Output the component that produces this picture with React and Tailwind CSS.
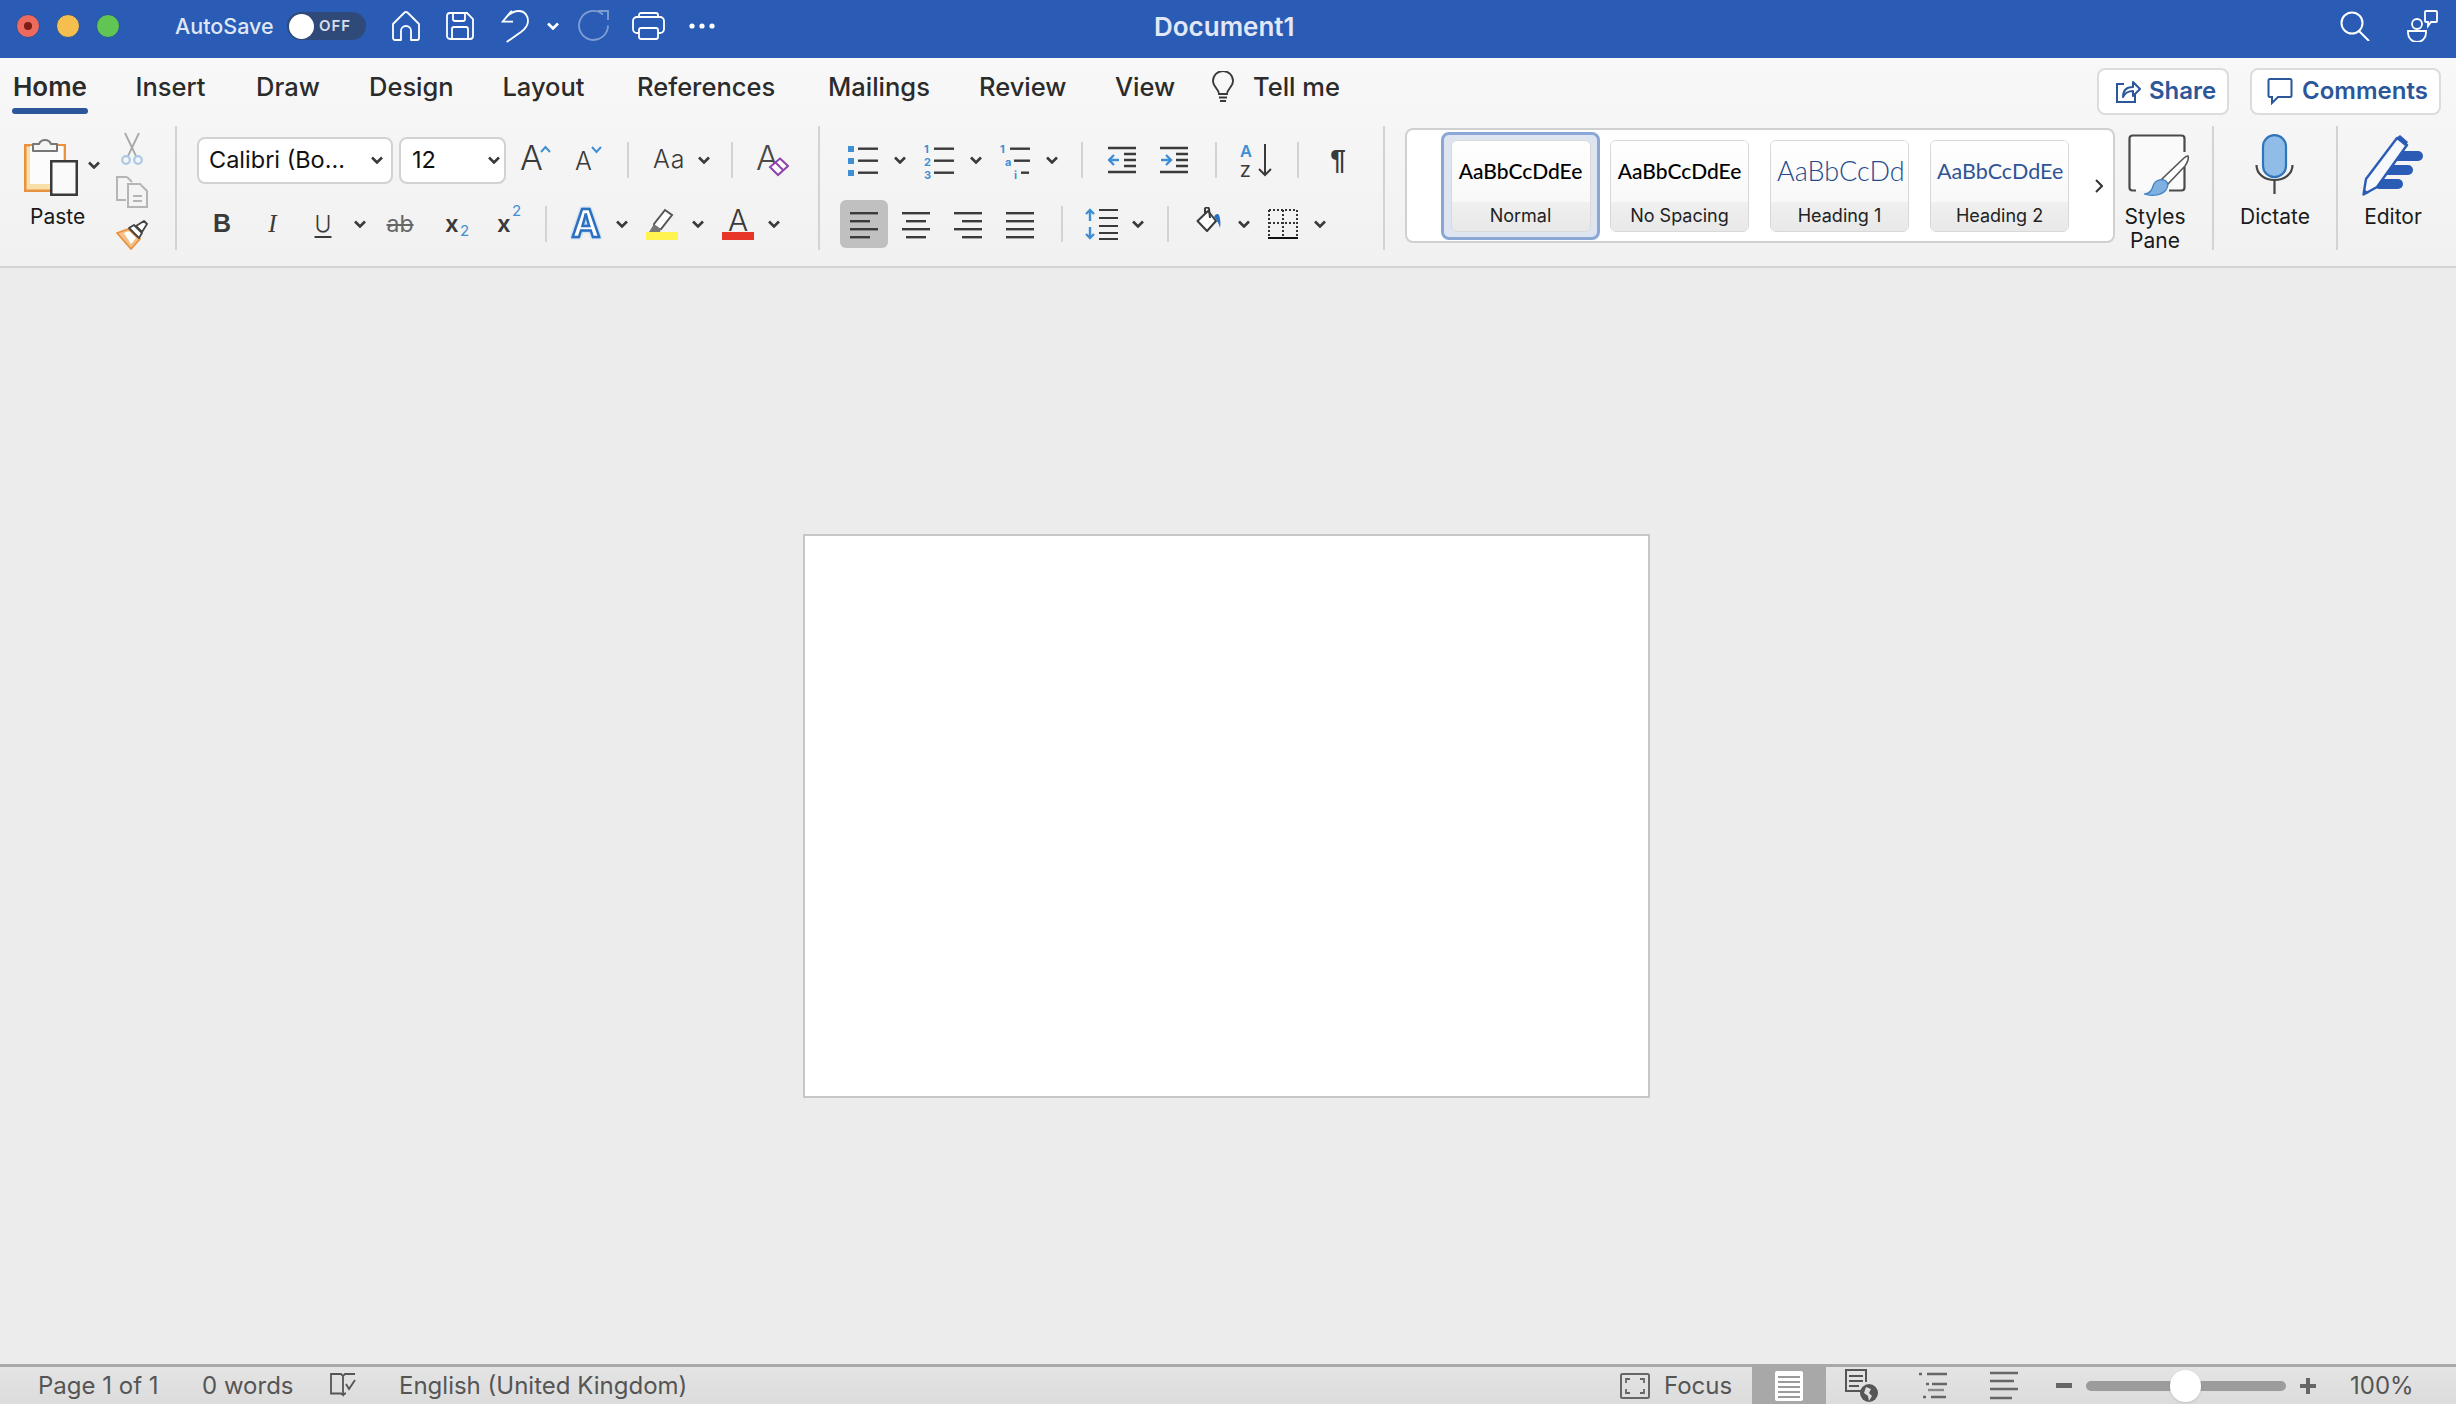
const UI = "font-['Inter','Noto_Sans',sans-serif]";

const Chev = ({ className = '', color = '#3a3a3a' }) => (
  <svg width="12" height="8" viewBox="0 0 12 8" className={'shrink-0 ' + className}>
    <path d="M1 1.5l5 5 5-5" fill="none" stroke={color} strokeWidth="2.6" />
  </svg>
);

const Sep = ({ className = '' }) => <div className={'w-[2px] h-[36px] shrink-0 bg-[#d3d3d3] ' + className} />;
const GroupSep = () => <div className="w-[2px] h-[124px] mt-[6px] shrink-0 bg-[#d3d3d3]" />;

function Lines({ rows, className = '' }) {
  // rows: [x1, x2] for horizontal bars, used by alignment icons
  return (
    <svg width="28" height="30" viewBox="0 0 28 30" className={'shrink-0 ' + className}>
      {rows.map((r, i) => (
        <rect key={i} x={r[0]} y={3 + i * 8} width={r[1] - r[0]} height="2.4" fill="#3a3a3a" />
      ))}
    </svg>
  );
}

function TitleBar() {
  return (
    <div className="h-[58px] shrink-0 bg-[#2a5cb5] flex items-center relative text-white pb-[6px]">
      <div className="w-[24px] h-[24px] rounded-full bg-[#ed6a5e] border border-[#24509c] ml-[16px] flex items-center justify-center">
        <div className="w-[8px] h-[8px] rounded-full bg-[#7c1d16]" />
      </div>
      <div className="w-[24px] h-[24px] rounded-full bg-[#f5bf4f] border border-[#24509c] ml-[16px]" />
      <div className="w-[24px] h-[24px] rounded-full bg-[#61c554] border border-[#24509c] ml-[16px]" />
      <span className="ml-[55px] w-[100px] text-[21.5px] font-medium text-[#dfe7f5] whitespace-nowrap">AutoSave</span>
      <div className="ml-[12px] w-[79px] h-[28px] rounded-full bg-[#2f4a78] flex items-center pl-[2px]">
        <div className="w-[25px] h-[25px] rounded-full bg-white" />
        <span className="ml-[5px] text-[15px] font-semibold tracking-[1px] text-[#d7deeb]">OFF</span>
      </div>
      <svg width="28" height="30" viewBox="0 0 28 30" className="ml-[26px]">
        <path d="M1 13L12 2q2-2 4 0l11 11v14a2 2 0 0 1-2 2h-6v-9a5 5 0 0 0-10 0v9H3a2 2 0 0 1-2-2z" fill="none" stroke="#fff" strokeWidth="1.800" strokeLinejoin="round" />
      </svg>
      <svg width="28" height="28" viewBox="0 0 28 28" className="ml-[26px]">
        <path d="M4 1h17l6 6v17a3 3 0 0 1-3 3H4a3 3 0 0 1-3-3V4a3 3 0 0 1 3-3z" fill="none" stroke="#fff" strokeWidth="1.800" />
        <path d="M7 1v6a2 2 0 0 0 2 2h8a2 2 0 0 0 2-2V1M6 27V17a2 2 0 0 1 2-2h12a2 2 0 0 1 2 2v10" fill="none" stroke="#fff" strokeWidth="1.800" />
      </svg>
      <svg width="28" height="34" viewBox="0 0 28 34" className="ml-[27px]">
        <path d="M10.700 1.700l-9 11H12M1.700 12.700C6 6 12 2 18 2c6 0 9 5 9 10 0 5-3 8-7 11L5.700 33" fill="none" stroke="#fff" strokeWidth="1.800" />
      </svg>
      <Chev className="ml-[18px]" color="#fff" />
      <svg width="32" height="32" viewBox="0 0 32 32" className="ml-[19px] opacity-40">
        <path d="M25 4.500A14.500 14.500 0 1 0 30 15.500M20 1h10v9" fill="none" stroke="#fff" strokeWidth="1.800" />
      </svg>
      <svg width="33" height="28" viewBox="0 0 33 28" className="ml-[22px]">
        <path d="M7 5V3a2 2 0 0 1 2-2h15a2 2 0 0 1 2 2v2M7 21H5a4 4 0 0 1-4-4V9a4 4 0 0 1 4-4h23a4 4 0 0 1 4 4v8a4 4 0 0 1-4 4h-2" fill="none" stroke="#fff" strokeWidth="1.800" />
        <rect x="7" y="16" width="19" height="11" rx="2" fill="none" stroke="#fff" strokeWidth="1.800" />
      </svg>
      <svg width="26" height="6" viewBox="0 0 26 6" className="ml-[24px]">
        <circle cx="3" cy="3" r="2.600" fill="#fff" />
        <circle cx="13" cy="3" r="2.600" fill="#fff" />
        <circle cx="23" cy="3" r="2.600" fill="#fff" />
      </svg>
      <span className="absolute left-[1154px] top-[12px] text-[26px] font-semibold leading-[30px] text-[#e2e8f5] whitespace-nowrap">Document1</span>
      <svg width="30" height="30" viewBox="0 0 30 30" className="ml-auto">
        <circle cx="12" cy="12" r="10.500" fill="none" stroke="#fff" strokeWidth="2" />
        <path d="M19 20l10 10" stroke="#fff" strokeWidth="2" />
      </svg>
      <svg width="32" height="32" viewBox="0 0 32 32" className="ml-[36px] mr-[18px]">
        <circle cx="11" cy="14" r="5" fill="none" stroke="#fff" strokeWidth="1.800" />
        <path d="M2 21h18v2a9 9 0 0 1-18 0z" fill="none" stroke="#fff" strokeWidth="1.800" />
        <path d="M20 1h10a1 1 0 0 1 1 1v9a1 1 0 0 1-1 1h-5l-3 4v-4h-2a1 1 0 0 1-1-1V2a1 1 0 0 1 1-1z" fill="none" stroke="#fff" strokeWidth="1.800" />
      </svg>
    </div>
  );
}

function Tabs() {
  return (
    <div className="h-[62px] shrink-0 flex items-center pb-[4px] text-[25.5px] leading-[38px] font-medium text-[#2b2b2b]">
      <div className="relative ml-[12px] w-[76px] text-center text-[26px] font-semibold whitespace-nowrap">
        Home
        <div className="absolute left-0 right-0 top-[40px] h-[6px] rounded-full bg-[#2b579a]" />
      </div>
      <span className="ml-[47px] w-[71px] text-center">Insert</span>
      <span className="ml-[50px] w-[64px] text-center">Draw</span>
      <span className="ml-[49px] w-[84px] text-center">Design</span>
      <span className="ml-[49px] w-[83px] text-center">Layout</span>
      <span className="ml-[52px] w-[138px] text-center">References</span>
      <span className="ml-[53px] w-[101px] text-center">Mailings</span>
      <span className="ml-[50px] w-[87px] text-center">Review</span>
      <span className="ml-[49px] w-[59px] text-center">View</span>
      <svg width="24" height="32" viewBox="0 0 24 32" className="ml-[37px]">
        <path d="M8 23c0-5-6-7-6-13a10 10 0 0 1 20 0c0 6-6 8-6 13z" fill="none" stroke="#3a3a3a" strokeWidth="1.800" />
        <path d="M8 26.500h8M9 30h6" stroke="#3a3a3a" strokeWidth="2" />
      </svg>
      <span className="ml-[18px] w-[86px] text-center whitespace-nowrap">Tell me</span>
      <div className="ml-auto mt-[8px] flex items-center text-[24px] font-semibold text-[#2b579a]">
        <div className="w-[132px] h-[47px] bg-white border-2 border-[#dcdcdc] rounded-lg flex items-center pl-[16px]">
          <svg width="26" height="26" viewBox="0 0 26 26">
            <path d="M9 6H2v18h18v-8" fill="none" stroke="#2b579a" strokeWidth="2" />
            <path d="M8 19c0-7 4-10 10-10V4l7 7-7 7v-5c-4 0-8 2-10 6z" fill="none" stroke="#2b579a" strokeWidth="2" strokeLinejoin="round" />
          </svg>
          <span className="ml-[8px]">Share</span>
        </div>
        <div className="ml-[21px] mr-[15px] w-[191px] h-[47px] bg-white border-2 border-[#dcdcdc] rounded-lg flex items-center pl-[15px]">
          <svg width="26" height="28" viewBox="0 0 26 28">
            <path d="M3 2h20a1.500 1.500 0 0 1 1.500 1.500v15A1.500 1.500 0 0 1 23 20H11l-6 6v-6H3a1.500 1.500 0 0 1-1.500-1.500v-15A1.500 1.500 0 0 1 3 2z" fill="none" stroke="#2b579a" strokeWidth="2" />
          </svg>
          <span className="ml-[9px]">Comments</span>
        </div>
      </div>
    </div>
  );
}

function Clipboard() {
  return (
    <div className="w-[150px] shrink-0 relative pl-[24px] pt-[16px]">
      <div className="flex items-start">
        <svg width="54" height="60" viewBox="0 0 54 60">
          <rect x="1.250" y="9.250" width="39.500" height="45.500" fill="#f9dfa8" stroke="#e8923f" strokeWidth="2.500" />
          <rect x="6" y="10" width="33.500" height="38" fill="#fcfcfc" />
          <path d="M9 15V8h6a6.500 6.500 0 0 1 12 0h6v7z" fill="#f5f5f5" stroke="#777" strokeWidth="2" strokeLinejoin="round" />
          <rect x="27.250" y="25.250" width="25.500" height="33.500" fill="#fafafa" stroke="#3a3a3a" strokeWidth="2.500" />
        </svg>
        <Chev className="ml-[10px] mt-[25px]" />
      </div>
      <div className="absolute left-[30px] top-[85px] text-[21px] leading-[24px] text-[#1a1a1a]">Paste</div>
    </div>
  );
}

function ClipTools() {
  return (
    <div className="w-[25px] shrink-0 -ml-[30px] mr-[30px] flex flex-col items-start pt-[12px]">
      <svg width="22" height="34" viewBox="0 0 22 34" className="ml-[1px]">
        <path d="M4 1l11 23M18 1L7 24" stroke="#a8a8a8" strokeWidth="1.800" fill="none" />
        <circle cx="5" cy="28" r="3.800" fill="none" stroke="#a9c9e6" strokeWidth="2.200" />
        <circle cx="17" cy="28" r="3.800" fill="none" stroke="#a9c9e6" strokeWidth="2.200" />
      </svg>
      <svg width="32" height="32" viewBox="0 0 32 32" className="-ml-[4px] mt-[10px]">
        <path d="M11 1H1v23h9M11 1l5 5" fill="none" stroke="#b5b5b5" strokeWidth="2" />
        <path d="M12 8h12l7 7v16H12z" fill="#f4f4f4" stroke="#b5b5b5" strokeWidth="2" />
        <path d="M17 20h9M17 25h9" stroke="#b5b5b5" strokeWidth="2" />
      </svg>
      <svg width="32" height="30" viewBox="0 0 32 30" className="-ml-[4px] mt-[12px]">
        <path d="M1 13l11-4 12 10-9 10z" fill="#f5c089" stroke="#e8923f" strokeWidth="1.800" strokeLinejoin="round" />
        <path d="M8 13l5-2 7 7-5 6z" fill="#fff" />
        <path d="M13 8l5-3 8 8-3 5z" fill="#fff" stroke="#444" strokeWidth="1.800" strokeLinejoin="round" />
        <path d="M20 6l8-5 3 3-5 8z" fill="#fff" stroke="#444" strokeWidth="1.800" strokeLinejoin="round" />
      </svg>
    </div>
  );
}

function FontGroup() {
  return (
    <div className="w-[641px] shrink-0 pt-[16px] flex flex-col gap-[16px]">
      <div className="h-[48px] flex items-center">
        <div className="ml-[20px] w-[196px] h-[47px] bg-white border-2 border-[#d2d2d2] rounded-lg flex items-center pl-[10px] text-[23.5px] text-[#111]">
          <span className="w-[160px] whitespace-nowrap">Calibri (Bo...</span>
          <Chev className="ml-[2px]" />
        </div>
        <div className="ml-[6px] w-[107px] h-[47px] bg-white border-2 border-[#d2d2d2] rounded-lg flex items-center pl-[11px] text-[23.5px] text-[#111]">
          <span className="w-[76px]">12</span>
          <Chev />
        </div>
        <svg width="32" height="48" viewBox="0 -8 32 48" className="ml-[14px]">
          <text x="0" y="26" fontSize="34" fontWeight="300" fontFamily="Inter" fill="#3a3a3a">A</text>
          <path d="M21 8l4.500-5 4.500 5" fill="none" stroke="#3f8fd2" strokeWidth="2" />
        </svg>
        <svg width="27" height="48" viewBox="0 -8 27 48" className="ml-[23px]">
          <text x="0" y="26" fontSize="25" fontWeight="300" fontFamily="Inter" fill="#3a3a3a">A</text>
          <path d="M17 3l4.500 5 4.500-5" fill="none" stroke="#3f8fd2" strokeWidth="2" />
        </svg>
        <Sep className="ml-[25px]" />
        <span className="ml-[24px] w-[44px] text-[25px] font-light text-[#3a3a3a] tracking-[1px]">Aa</span>
        <Chev className="ml-[1px]" />
        <Sep className="ml-[21px]" />
        <svg width="33" height="48" viewBox="0 -8 33 48" className="ml-[23px]">
          <text x="0" y="26" fontSize="34" fontWeight="300" fontFamily="Inter" fill="#4a4a4a">A</text>
          <path d="M24 14.500l8 7.500-10 9-8-8z" fill="#fff" stroke="#8e44ad" strokeWidth="2" />
          <path d="M19 18l8 8" stroke="#8e44ad" strokeWidth="2" />
        </svg>
      </div>
      <div className="h-[48px] flex items-center text-[#3a3a3a]">
        <span className="ml-[36px] w-[15px] text-center text-[25px] font-bold font-['Liberation_Sans']">B</span>
        <span className="ml-[37px] w-[15px] text-center text-[25px] italic font-['Liberation_Serif']">I</span>
        <span className="ml-[34px] w-[18px] text-center text-[23px] font-light underline underline-offset-[4px] decoration-2">U</span>
        <Chev className="ml-[22px]" />
        <span className="ml-[18px] w-[32px] text-center text-[23px] line-through decoration-2 text-[#666]">ab</span>
        <span className="ml-[29px] w-[22px] text-[24px] font-semibold relative">
          x<span className="absolute left-[15px] top-[14px] text-[15px] font-normal text-[#3f8fd2]">2</span>
        </span>
        <span className="ml-[30px] w-[23px] text-[24px] font-semibold relative">
          x<span className="absolute left-[15px] -top-[6px] text-[15px] font-normal text-[#3f8fd2]">2</span>
        </span>
        <Sep className="ml-[25px]" />
        <svg width="32" height="48" viewBox="0 -8 32 48" className="ml-[23px] drop-shadow-[0_0_1px_#7fb5e8]">
          <text x="16" y="29" fontSize="38" fontWeight="700" fontFamily="Inter" textAnchor="middle" fill="#fff" stroke="#2a6fc0" strokeWidth="2.400">A</text>
        </svg>
        <Chev className="ml-[14px]" />
        <svg width="32" height="32" viewBox="0 0 32 32" className="ml-[18px]">
          <path d="M8 16L19 2l7 5-11 14-7 1z" fill="#fff" stroke="#555" strokeWidth="2" />
          <path d="M3 24l5-8 7 5-1 3z" fill="#777" />
          <rect x="0" y="24" width="32" height="8" fill="#fff44f" />
        </svg>
        <Chev className="ml-[14px]" />
        <svg width="32" height="48" viewBox="0 -8 32 48" className="ml-[18px]">
          <text x="16" y="23" fontSize="30" fontWeight="300" fontFamily="Inter" textAnchor="middle" fill="#3a3a3a">A</text>
          <rect x="0" y="24" width="32" height="8" fill="#e8352a" />
        </svg>
        <Chev className="ml-[14px]" />
      </div>
    </div>
  );
}

function ListIcon({ marks, className = '' }) {
  return (
    <svg width="30" height="44" viewBox="0 -6 30 44" className={'shrink-0 ' + className}>
      {marks.map((m, i) => (
        <g key={i}>
          {m.square ? (
            <rect x="0" y={2 + i * 12} width="6" height="6" fill="#3f8fd2" />
          ) : (
            <text x={m.x} y={9 + i * 13} fontSize="11" fontWeight="700" fontFamily="Inter" fill="#3f8fd2">{m.t}</text>
          )}
          <rect x={m.from} y={3.5 + i * 12} width={30 - m.from - (m.cut || 0)} height="2.400" fill="#3a3a3a" />
        </g>
      ))}
    </svg>
  );
}

function ParaGroup() {
  return (
    <div className="w-[563px] shrink-0 pt-[16px] flex flex-col gap-[16px]">
      <div className="h-[48px] flex items-center">
        <ListIcon className="ml-[28px]" marks={[{ square: 1, from: 10 }, { square: 1, from: 10 }, { square: 1, from: 10 }]} />
        <Chev className="ml-[16px]" />
        <ListIcon className="ml-[18px]" marks={[{ t: '1', x: 0, from: 10 }, { t: '2', x: 0, from: 10 }, { t: '3', x: 0, from: 10 }]} />
        <Chev className="ml-[16px]" />
        <ListIcon className="ml-[18px]" marks={[{ t: '1', x: 0, from: 10 }, { t: 'a', x: 5, from: 14 }, { t: 'i', x: 14, from: 21, cut: 1 }]} />
        <Chev className="ml-[16px]" />
        <Sep className="ml-[23px]" />
        <svg width="28" height="32" viewBox="0 0 28 32" className="ml-[25px]">
          <path d="M0 4h28M16 16h12M16 10h12M16 22h12M0 28h28" stroke="#3a3a3a" strokeWidth="2.400" />
          <path d="M11 16H1M6 11l-5 5 5 5" fill="none" stroke="#3f8fd2" strokeWidth="2.400" />
        </svg>
        <svg width="28" height="32" viewBox="0 0 28 32" className="ml-[24px]">
          <path d="M0 4h28M16 16h12M16 10h12M16 22h12M0 28h28" stroke="#3a3a3a" strokeWidth="2.400" />
          <path d="M1 16h10M6 11l5 5-5 5" fill="none" stroke="#3f8fd2" strokeWidth="2.400" />
        </svg>
        <Sep className="ml-[27px]" />
        <svg width="32" height="48" viewBox="0 -8 32 48" className="ml-[23px]">
          <text x="0" y="13" fontSize="16.500" fontWeight="600" fontFamily="Inter" fill="#3f8fd2">A</text>
          <text x="0" y="33" fontSize="16.500" fontWeight="500" fontFamily="Inter" fill="#3a3a3a">Z</text>
          <path d="M25 0v31M19 25l6 6 6-6" fill="none" stroke="#3a3a3a" strokeWidth="2" />
        </svg>
        <Sep className="ml-[25px]" />
        <span className="ml-[29px] w-[20px] text-center text-[28px] font-bold text-[#3a3a3a] font-['Liberation_Sans']">¶</span>
      </div>
      <div className="h-[48px] flex items-center">
        <div className="ml-[20px] w-[48px] h-[48px] rounded-md bg-[#c0c0c0] flex items-center justify-center">
          <Lines rows={[[0, 28], [0, 20], [0, 28], [0, 20]]} />
        </div>
        <Lines className="ml-[14px]" rows={[[0, 28], [4, 24], [0, 28], [4, 24]]} />
        <Lines className="ml-[24px]" rows={[[0, 28], [8, 28], [0, 28], [8, 28]]} />
        <Lines className="ml-[24px]" rows={[[0, 28], [0, 28], [0, 28], [0, 28]]} />
        <Sep className="ml-[27px]" />
        <svg width="33" height="34" viewBox="0 0 33 34" className="ml-[22px]">
          <path d="M5 14V3M1 7l4-4 4 4M5 20v11M1 27l4 4 4-4" fill="none" stroke="#3f8fd2" strokeWidth="2.400" />
          <path d="M14 3h19M14 11h19M14 19h19M14 26h19M14 32h19" stroke="#3a3a3a" strokeWidth="2.200" />
        </svg>
        <Chev className="ml-[14px]" />
        <Sep className="ml-[23px]" />
        <svg width="26" height="26" viewBox="0 0 26 26" className="ml-[27px] mb-[8px]">
          <path d="M1.500 14L12 4l8 10-9 10z" fill="#fff" stroke="#3a3a3a" strokeWidth="2" strokeLinejoin="round" />
          <path d="M9 7V3a2 2 0 0 1 4-1l1 9" fill="none" stroke="#3a3a3a" strokeWidth="2" />
          <path d="M18 10c1-3 4-4 5-2 1 2 2 8 1 13-1-4-3-8-6-11z" fill="#2a6fc0" />
        </svg>
        <Chev className="ml-[16px]" />
        <svg width="30" height="30" viewBox="0 0 30 30" className="ml-[18px]">
          <path d="M1 1h28v26M1 1v26M15 1v26M1 14h28" fill="none" stroke="#333" strokeWidth="2" strokeDasharray="2 2" />
          <rect x="0" y="28" width="30" height="2.500" fill="#111" />
        </svg>
        <Chev className="ml-[16px]" />
      </div>
    </div>
  );
}

function StyleCard({ label, sample, className = '', sampleClass = 'justify-center' }) {
  return (
    <div className={'h-[92px] rounded-md border border-[#d8d8d8] overflow-hidden flex flex-col shrink-0 ' + className}>
      <div className={"h-[62px] bg-gradient-to-b from-white to-[#f8f8f8] flex items-center overflow-hidden font-['Lato',sans-serif] whitespace-nowrap " + sampleClass}>
        {sample}
      </div>
      <div className="flex-1 bg-gradient-to-b from-[#f0f0f0] to-[#e8e8e8] flex items-center justify-center pb-[2px] text-[18px] text-[#222]">{label}</div>
    </div>
  );
}

function Gallery() {
  return (
    <div className="ml-[20px] mt-[8px] w-[710px] h-[115px] shrink-0 bg-white border-2 border-[#d0d0d0] rounded-lg flex items-center pl-[34px]">
      <div className="w-[159px] h-[108px] rounded-lg bg-[#dfe5f0] border-[3px] border-[#8ba7d5] flex items-center justify-center shrink-0">
        <StyleCard className="w-[140px]" label="Normal" sample={<span className="text-[21px] font-medium text-black">AaBbCcDdEe</span>} />
      </div>
      <StyleCard className="w-[139px] ml-[10px]" label="No Spacing" sample={<span className="text-[21px] font-medium text-black">AaBbCcDdEe</span>} />
      <StyleCard className="w-[139px] ml-[21px]" sampleClass="justify-start pl-[6px]" label="Heading 1" sample={<span className="text-[27px] font-light text-[#254a8c]">AaBbCcDd</span>} />
      <StyleCard className="w-[139px] ml-[21px]" sampleClass="justify-start pl-[6px]" label="Heading 2" sample={<span className="text-[21.5px] text-[#2f5496]">AaBbCcDdEe</span>} />
      <svg width="8" height="14" viewBox="0 0 8 14" className="ml-[26px]">
        <path d="M1 1l6 6-6 6" fill="none" stroke="#333" strokeWidth="2" />
      </svg>
    </div>
  );
}

function BigButton({ className, icon, children }) {
  return (
    <div className={'shrink-0 flex flex-col items-center pt-[13px] text-[21px] leading-[24px] text-[#1a1a1a] ' + className}>
      <div className="h-[64px] flex items-center">{icon}</div>
      <div className="mt-[8px] text-center">{children}</div>
    </div>
  );
}

function Ribbon() {
  return (
    <div className="h-[210px] shrink-0 bg-gradient-to-b from-[#f8f8f8] to-[#f1f1f1] border-b-2 border-[#d4d4d4]">
      <Tabs />
      <div className="h-[146px] flex items-start">
        <Clipboard />
        <ClipTools />
        <GroupSep />
        <FontGroup />
        <GroupSep />
        <ParaGroup />
        <GroupSep />
        <Gallery />
        <BigButton
          className="w-[80px]"
          icon={
            <svg width="62" height="62" viewBox="0 0 62 62" className="ml-[8px]">
              <rect x="2" y="2" width="54" height="55" rx="3" fill="#fafafa" />
              <path d="M8 56.500H4.500a3 3 0 0 1-3-3V4.500a3 3 0 0 1 3-3h49a3 3 0 0 1 3 3V18M56.500 33v20.500a3 3 0 0 1-3 3H41" fill="none" stroke="#4a4a4a" strokeWidth="2.200" />
              <path d="M60 22c1 3-1 7-3 10L40 50l-6-5 22-21c1-1 3-2 4-2z" fill="#fff" stroke="#555" strokeWidth="1.600" />
              <path d="M16 60c5 0 8-4 9-8 2-6 9-8 13-5 3 3 2 8-2 11-5 4-14 4-20 2z" fill="#7fb0e0" stroke="#3f7fc4" strokeWidth="1.200" />
            </svg>
          }
        >
          Styles<br />Pane
        </BigButton>
        <div className="ml-[17px]"><GroupSep /></div>
        <BigButton
          className="w-[122px]"
          icon={
            <svg width="40" height="62" viewBox="0 0 40 62">
              <rect x="8" y="1.200" width="23" height="42" rx="11.500" fill="#8fbde8" stroke="#2f75bb" strokeWidth="2.200" />
              <path d="M1.500 31c0 9 8 15 18 15s18-6 18-15" fill="none" stroke="#444" strokeWidth="2.200" />
              <path d="M19.500 46v14" stroke="#444" strokeWidth="2.200" />
            </svg>
          }
        >
          Dictate
        </BigButton>
        <GroupSep />
        <BigButton
          className="w-[110px]"
          icon={
            <svg width="62" height="62" viewBox="0 0 62 62">
              <rect x="26" y="17" width="35" height="10" rx="5" fill="#2b5cb5" />
              <rect x="20" y="31" width="31" height="10" rx="5" fill="#2b5cb5" />
              <rect x="12" y="45" width="29" height="10" rx="5" fill="#2b5cb5" />
              <path d="M1.500 60.500L4 45 35 4l10 7-30 42z" fill="#f6f8fb" stroke="#2b5cb5" strokeWidth="2.400" strokeLinejoin="round" />
              <path d="M34 4l4-3 8 7-3 4z" fill="#2b5cb5" />
              <path d="M1 61l1-6 5 4z" fill="#2b5cb5" />
            </svg>
          }
        >
          Editor
        </BigButton>
      </div>
    </div>
  );
}

function StatusBar() {
  return (
    <div className="h-[40px] shrink-0 border-t-[3px] border-[#a8a8a8] bg-gradient-to-b from-[#e4e4e4] to-[#dcdcdc] flex items-center text-[24px] text-[#555]">
      <span className="ml-[38px] w-[122px] whitespace-nowrap">Page 1 of 1</span>
      <span className="ml-[42px] w-[88px] whitespace-nowrap">0 words</span>
      <svg width="28" height="28" viewBox="0 0 28 28" className="ml-[40px]">
        <path d="M1 2h10l2 2v19l-2-1.500H1zM13 4l2-2h10M13 23l2-1.500h1" fill="none" stroke="#555" strokeWidth="1.800" />
        <path d="M16 12l3 5 6-9" fill="none" stroke="#555" strokeWidth="1.800" />
      </svg>
      <span className="ml-[41px] whitespace-nowrap">English (United Kingdom)</span>
      <div className="ml-auto mr-[44px] h-full flex items-center">
        <svg width="30" height="26" viewBox="0 0 30 26">
          <rect x="1" y="1" width="28" height="24" rx="1.500" fill="none" stroke="#666" strokeWidth="2" />
          <path d="M6 10V6h4M20 6h4v4M6 16v4h4M24 16v4h-4" fill="none" stroke="#666" strokeWidth="1.800" />
        </svg>
        <span className="ml-[14px] w-[67px] whitespace-nowrap">Focus</span>
        <div className="ml-[21px] w-[74px] h-full bg-[#a8a8a8] flex items-center justify-center">
          <svg width="28" height="30" viewBox="0 0 28 30">
            <rect x="0" y="0" width="28" height="30" rx="2" fill="#fff" />
            <path d="M3 6h22M3 11h22M3 16h22M3 21h22M3 26h22" stroke="#9a9a9a" strokeWidth="2" />
          </svg>
        </div>
        <svg width="33" height="34" viewBox="0 0 33 34" className="ml-[19px]">
          <path d="M19 22H1V1h20v12" fill="none" stroke="#555" strokeWidth="2" />
          <path d="M4 7h14M4 12h14M4 17h10" stroke="#555" strokeWidth="2" />
          <circle cx="24" cy="24" r="9" fill="#555" />
          <path d="M21 18l5 2-2 4 3 3-3 5-1-5-4-3z" fill="#ddd" />
        </svg>
        <svg width="30" height="32" viewBox="0 0 30 32" className="ml-[40px]">
          <path d="M1 4h3M9 4h20M8 14h3M14 14h15M5 27h3M13 27h15" stroke="#666" strokeWidth="2.400" />
          <path d="M10 20h16" stroke="#888" strokeWidth="2.400" />
        </svg>
        <svg width="28" height="32" viewBox="0 0 28 32" className="ml-[42px]">
          <path d="M0 3h28M0 11h24M0 19h28M0 28h22" stroke="#666" strokeWidth="2.600" />
        </svg>
        <div className="ml-[38px] w-[16px] h-[5px] bg-[#666]" />
        <div className="ml-[14px] w-[200px] h-[10px] rounded-full bg-[#9c9c9c] relative">
          <div className="absolute left-[84px] -top-[11px] w-[31px] h-[32px] rounded-full bg-white shadow-sm" />
        </div>
        <svg width="16" height="16" viewBox="0 0 16 16" className="ml-[14px]">
          <path d="M8 0v16M0 8h16" stroke="#666" strokeWidth="4" />
        </svg>
        <span className="ml-[34px] w-[62px] whitespace-nowrap">100%</span>
      </div>
    </div>
  );
}

export default function App() {
  return (
    <div className={'h-screen flex flex-col overflow-hidden bg-[#ececec] ' + UI}>
      <TitleBar />
      <Ribbon />
      <div className="flex-1 flex items-center justify-center">
        <div className="w-[847px] h-[564px] mr-[3px] bg-white border-2 border-[#c6c6c6]" />
      </div>
      <StatusBar />
    </div>
  );
}
